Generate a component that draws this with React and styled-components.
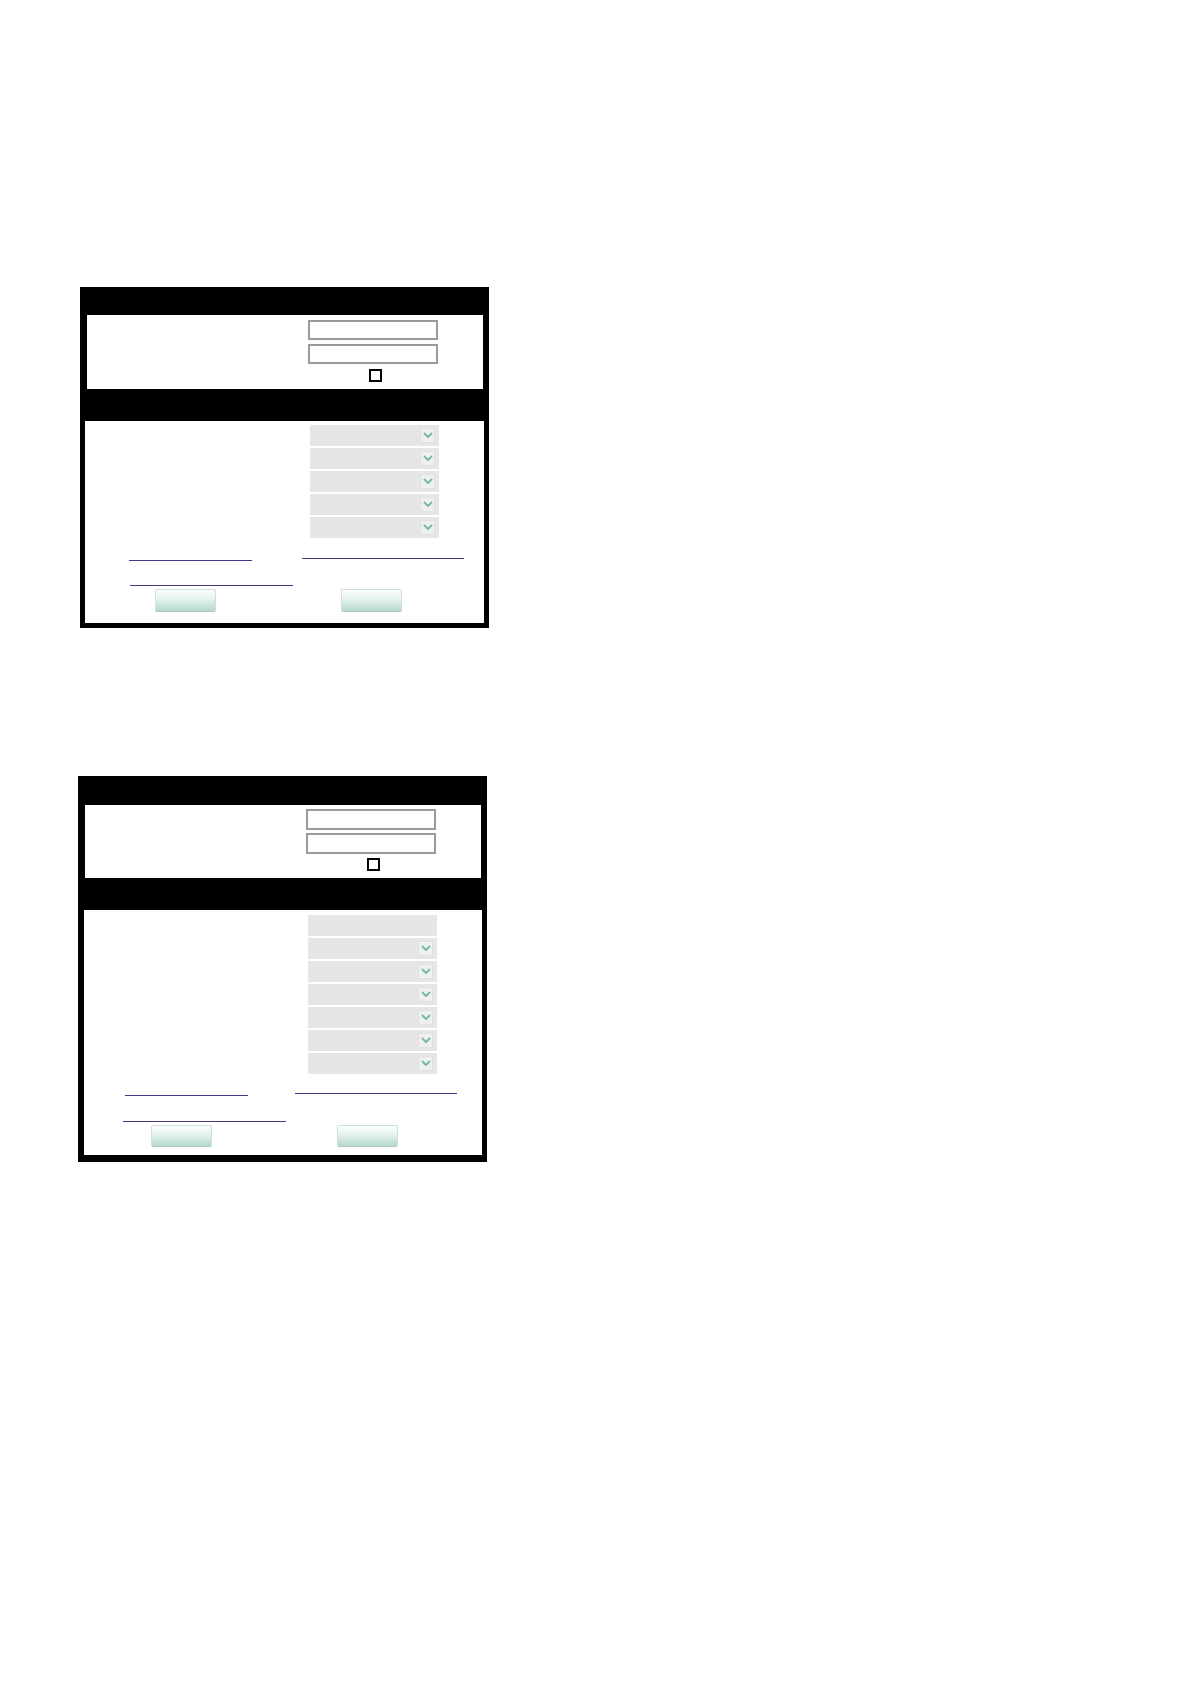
import React from 'react';
import styled, { createGlobalStyle } from 'styled-components';

const Global = createGlobalStyle`
  html, body { margin: 0; padding: 0; background: #fff; }
  body { font-family: "Liberation Sans", Arial, sans-serif; }
  * { box-sizing: border-box; }
`;

const Page = styled.div`
  width: 1190px;
  min-height: 1684px;
  display: flex;
  flex-direction: column;
  align-items: flex-start;
  background: #fff;
`;

const Panel = styled.section`
  margin-left: ${p => p.$left}px;
  margin-top: ${p => p.$top}px;
  width: 409px;
  background: #000;
  display: flex;
  flex-direction: column;
`;

const Band = styled.div`
  height: ${p => p.$h}px;
`;

const Section = styled.div`
  background: #fff;
  margin: 0 ${p => p.$right}px 0 ${p => p.$left}px;
  height: ${p => p.$h}px;
  display: flex;
  flex-direction: column;
`;

const LoginFields = styled.div`
  display: flex;
  flex-direction: column;
  align-items: flex-start;
  padding-left: ${p => p.$offset}px;
  padding-top: ${p => p.$top}px;
  gap: ${p => p.$gap}px;
`;

const TextInput = styled.input`
  width: 130px;
  height: ${p => p.$h}px;
  border: 2px solid #9a9a9a;
  background: #fff;
  margin: 0;
  padding: 0 3px;
  outline: none;
`;

const Check = styled.span`
  display: block;
  width: 13px;
  height: 13px;
  border: 2px solid #000;
  background: #fff;
  margin-left: 61px;
  margin-top: ${p => p.$top}px;
`;

const SelectList = styled.div`
  display: flex;
  flex-direction: column;
  gap: 2px;
  padding-left: ${p => p.$offset}px;
  padding-top: ${p => p.$top}px;
`;

const SelectBox = styled.div`
  width: 129px;
  height: 21px;
  background: #e6e6e6;
  display: flex;
  align-items: center;
  justify-content: flex-end;
  padding-right: 4px;
`;

const ArrowBtn = styled.span`
  width: 15px;
  height: 15px;
  background: #eef0ef;
  border: 1px solid #dfe2e0;
  display: flex;
  align-items: center;
  justify-content: center;
`;

const Footer = styled.div`
  display: grid;
  grid-template-columns: ${p => p.$split}px 1fr;
`;

const FooterRow = styled.div`
  grid-column: 1 / -1;
  display: grid;
  grid-template-columns: subgrid;
  height: ${p => p.$h}px;
  margin-top: ${p => p.$mt || 0}px;
  align-items: end;
`;

const UnderLink = styled.a`
  display: block;
  width: ${p => p.$w}px;
  height: 12px;
  margin-left: ${p => p.$ml}px;
  margin-bottom: ${p => p.$lift || 0}px;
  border-bottom: 1px solid #433787;
  color: #fff;
  font-size: 11px;
  text-decoration: none;
`;

const Button = styled.button`
  width: 61px;
  height: 100%;
  margin: 0 0 0 ${p => p.$ml}px;
  padding: 0;
  border: 1px solid #cfe0db;
  border-bottom-color: #a9cbc2;
  border-radius: 2px;
  background: linear-gradient(to bottom, #fbfefd 0%, #e3f1ed 45%, #b5d8cf 100%);
  align-self: stretch;
`;

const Chevron = () => (
  <svg width="10" height="7" viewBox="0 0 10 7">
    <path d="M1.5 1.5 L5 5 L8.5 1.5" fill="none" stroke="#7ab8a7" strokeWidth="1.9" strokeLinecap="round" strokeLinejoin="round" />
  </svg>
);

const panels = [
  {
    left: 80, top: 287, header: 28,
    s1: { left: 7, right: 6, h: 74, offset: 221, top: 5, gap: 4, inputH: 20, checkTop: 1 },
    band: 32,
    s2: { left: 5, right: 5, h: 202, offset: 225, top: 4 },
    selects: [true, true, true, true, true],
    bottom: 5,
    footer: { split: 217, r1: 23, r2: 25, r3: 23, l1: 44, l3: 45, b1: 70, b2: 39 },
  },
  {
    left: 78, top: 148, header: 29,
    s1: { left: 7, right: 6, h: 73, offset: 221, top: 4, gap: 3, inputH: 21, checkTop: 1 },
    band: 32,
    s2: { left: 6, right: 5, h: 245, offset: 224, top: 5 },
    selects: [false, true, true, true, true, true, true],
    bottom: 7,
    footer: { split: 211, r1: 22, r2: 26, r3: 22, l1: 41, l3: 39, b1: 67, b2: 42 },
  },
];

function FormPanel({ cfg }) {
  const f = cfg.footer;
  return (
    <Panel $left={cfg.left} $top={cfg.top}>
      <Band $h={cfg.header} />
      <Section $left={cfg.s1.left} $right={cfg.s1.right} $h={cfg.s1.h}>
        <LoginFields $offset={cfg.s1.offset} $top={cfg.s1.top} $gap={cfg.s1.gap}>
          <TextInput type="text" $h={cfg.s1.inputH} />
          <TextInput type="password" $h={cfg.s1.inputH} />
          <Check $top={cfg.s1.checkTop} />
        </LoginFields>
      </Section>
      <Band $h={cfg.band} />
      <Section $left={cfg.s2.left} $right={cfg.s2.right} $h={cfg.s2.h}>
        <SelectList $offset={cfg.s2.offset} $top={cfg.s2.top}>
          {cfg.selects.map((arrow, i) => (
            <SelectBox key={i}>
              {arrow && (
                <ArrowBtn>
                  <Chevron />
                </ArrowBtn>
              )}
            </SelectBox>
          ))}
        </SelectList>
        <Footer $split={f.split}>
          <FooterRow $h={f.r1}>
            <UnderLink href="#" $w={123} $ml={f.l1} />
            <UnderLink href="#" $w={162} $ml={0} $lift={2} />
          </FooterRow>
          <FooterRow $h={f.r2}>
            <UnderLink href="#" $w={163} $ml={f.l3} />
          </FooterRow>
          <FooterRow $h={f.r3} $mt={3}>
            <Button type="button" $ml={f.b1} />
            <Button type="button" $ml={f.b2} />
          </FooterRow>
        </Footer>
      </Section>
      <Band $h={cfg.bottom} />
    </Panel>
  );
}

export default function App() {
  return (
    <>
      <Global />
      <Page>
        {panels.map((cfg, i) => (
          <FormPanel key={i} cfg={cfg} />
        ))}
      </Page>
    </>
  );
}
